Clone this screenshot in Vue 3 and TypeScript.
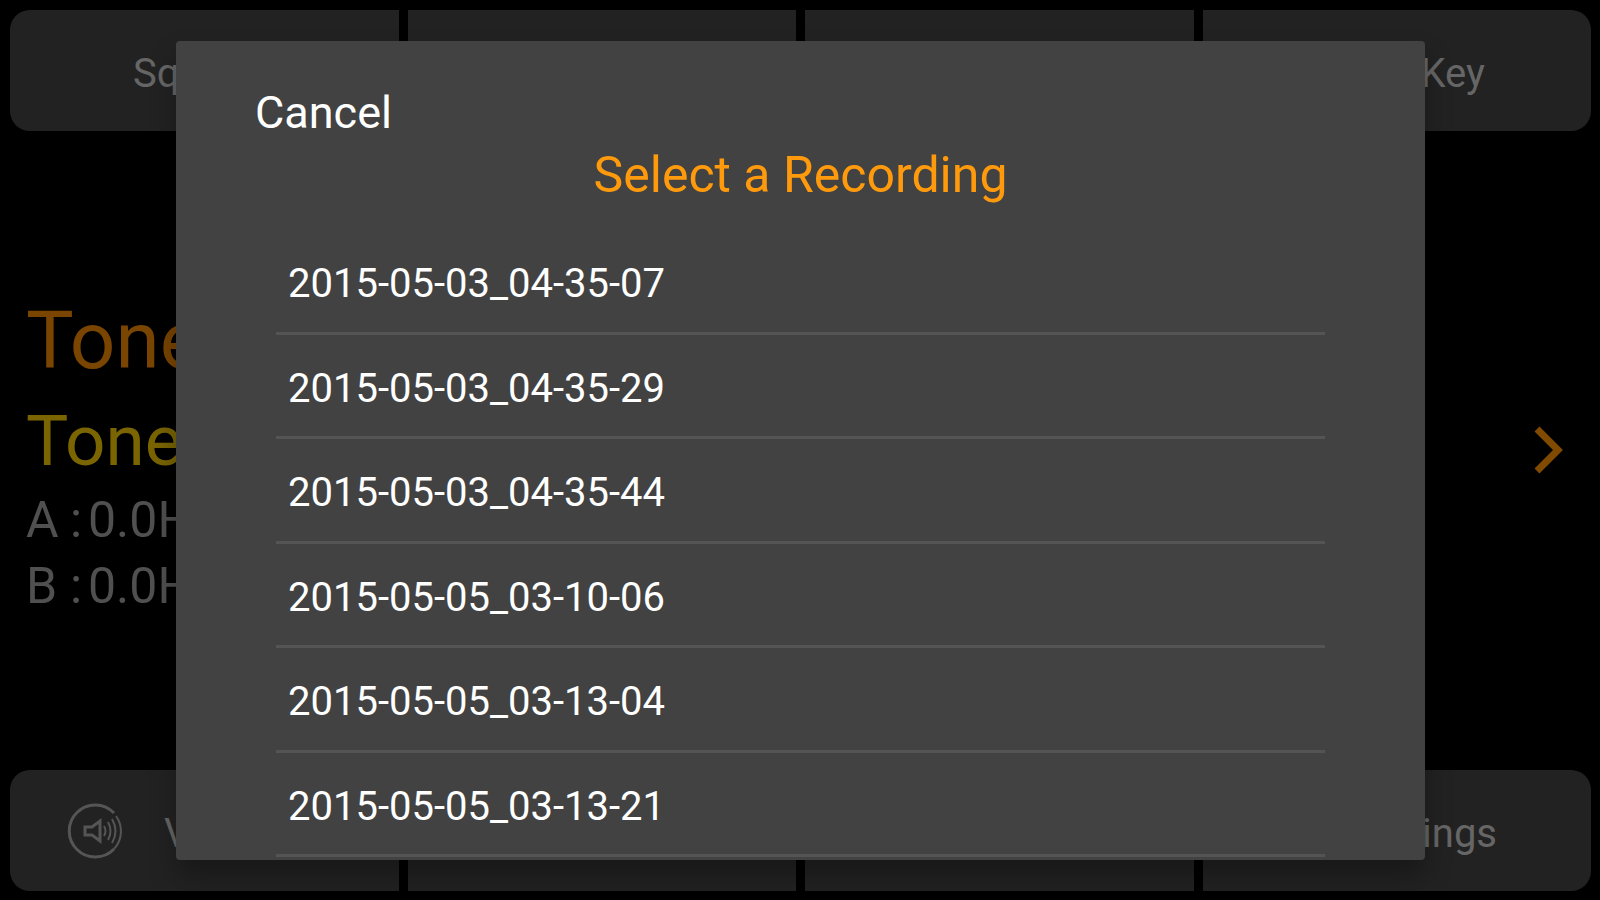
<script setup lang="ts">
import { ref } from 'vue'

interface Reading {
  name: string
  value: string
}

const recordings: string[] = [
  '2015-05-03_04-35-07',
  '2015-05-03_04-35-29',
  '2015-05-03_04-35-44',
  '2015-05-05_03-10-06',
  '2015-05-05_03-13-04',
  '2015-05-05_03-13-21',
]

const readings: Reading[] = [
  { name: 'A', value: '0.0Hz' },
  { name: 'B', value: '0.0Hz' },
]

const open = ref(true)
const selected = ref('')

function choose(name: string): void {
  selected.value = name
  open.value = false
}
</script>

<template>
  <div class="screen">
    <main class="app">
      <nav class="bar">
        <button type="button" class="cell">Squelch</button>
        <div class="cell"></div>
        <div class="cell"></div>
        <button type="button" class="cell end key">Key</button>
      </nav>

      <section class="status">
        <div class="readout">
          <h1 class="tone primary">Tone</h1>
          <h2 class="tone secondary">Tone</h2>
          <p v-for="r in readings" :key="r.name" class="reading">
            <span>{{ r.name }}</span><span>:</span><span>{{ r.value }}</span>
          </p>
        </div>
        <button type="button" class="next" aria-label="Next">
          <svg width="32" height="48" viewBox="0 0 32 48" fill="none">
            <path d="M4 3 L25 24 L4 45" stroke="#804b00" stroke-width="7" />
          </svg>
        </button>
      </section>

      <nav class="bar">
        <button type="button" class="cell start">
          <svg class="speaker" width="56" height="56" viewBox="0 0 56 56" fill="none" stroke="#555" stroke-width="2">
            <path d="M47 10 A26 26 0 1 0 47 46" stroke-width="3" />
            <path d="M49 13 A26 26 0 0 1 47 46" />
            <path d="M18 24 H25 L33 18 V38 L25 32 H18 Z" stroke-width="3" />
            <path d="M37 23 Q40 28 37 33 M41 19 Q46 28 41 37 M45 16 Q52 28 45 40" />
          </svg>
          <span class="label">Volume</span>
        </button>
        <div class="cell"></div>
        <div class="cell"></div>
        <button type="button" class="cell end settings"><span class="label">Settings</span></button>
      </nav>
    </main>

    <div v-if="open" class="overlay">
      <section class="dialog" role="dialog" aria-modal="true" aria-labelledby="dialog-title">
        <button type="button" class="cancel" @click="open = false">Cancel</button>
        <h2 id="dialog-title" class="title">Select a Recording</h2>
        <ul class="list">
          <li v-for="name in recordings" :key="name" class="row">
            <button type="button" class="item" @click="choose(name)">{{ name }}</button>
          </li>
        </ul>
      </section>
    </div>
  </div>
</template>

<style>
body {
  margin: 0;
  background: #000;
}
</style>

<style scoped>
.screen {
  position: relative;
  min-height: 100vh;
  overflow: hidden;
  background: #000;
  font-family: Roboto, "Liberation Sans", sans-serif;
}

button {
  margin: 0;
  padding: 0;
  border: 0;
  background: none;
  color: inherit;
  font: inherit;
  cursor: pointer;
}

.app {
  display: flex;
  flex-direction: column;
  box-sizing: border-box;
  min-height: 100vh;
  padding: 10px 9px 9px 10px;
}

.bar {
  display: grid;
  grid-template-columns: repeat(4, 1fr);
  gap: 9px;
  height: 121px;
  border-radius: 20px;
  overflow: hidden;
}

.cell {
  display: flex;
  align-items: center;
  justify-content: center;
  background: #222;
  color: #666;
  font-size: 40px;
  line-height: 48px;
  white-space: nowrap;
}

.bar:first-child .cell,
.label {
  padding-top: 6px;
}

.end {
  justify-content: flex-end;
}

.key {
  padding-right: 106px;
}

.settings {
  padding-right: 94px;
}

.start {
  justify-content: flex-start;
  gap: 41px;
  padding-left: 57px;
}

.speaker {
  flex: none;
}

.status {
  flex: 1;
  display: flex;
  align-items: center;
  justify-content: space-between;
  padding: 0 26px 2px 16px;
}

.readout {
  padding-top: 6px;
}

.tone {
  margin: 0;
  font-weight: 400;
}

.primary {
  color: #7a4500;
  font-size: 80px;
  line-height: 108px;
}

.secondary {
  color: #7a6500;
  font-size: 71px;
  line-height: 92px;
}

.reading {
  display: grid;
  grid-template-columns: 44px 18px auto;
  margin: 0;
  color: #505050;
  font-size: 50px;
  line-height: 66px;
}

.next svg {
  display: block;
}

.overlay {
  position: absolute;
  inset: 0;
  display: flex;
  box-sizing: border-box;
  padding: 41px 175px 40px 176px;
}

.dialog {
  flex: 1;
  display: flex;
  flex-direction: column;
  box-sizing: border-box;
  padding: 44px 100px 3px;
  border-radius: 4px;
  background: #424242;
  box-shadow: 0 16px 28px rgba(0, 0, 0, 0.3);
}

.cancel {
  align-self: flex-start;
  margin-left: -21px;
  color: #fff;
  font-size: 45px;
  line-height: 56px;
}

.title {
  margin: 0;
  color: #ff9a0c;
  font-size: 50px;
  font-weight: 400;
  line-height: 68px;
  text-align: center;
}

.list {
  flex: 1;
  display: flex;
  flex-direction: column;
  margin: 21px 0 0;
  padding: 0;
  list-style: none;
}

.row {
  flex: 1;
  display: flex;
  border-bottom: 3px solid #545454;
}

.item {
  flex: 1;
  padding: 7px 12px 0;
  color: #fff;
  font-size: 40px;
  line-height: 48px;
  text-align: left;
}
</style>
